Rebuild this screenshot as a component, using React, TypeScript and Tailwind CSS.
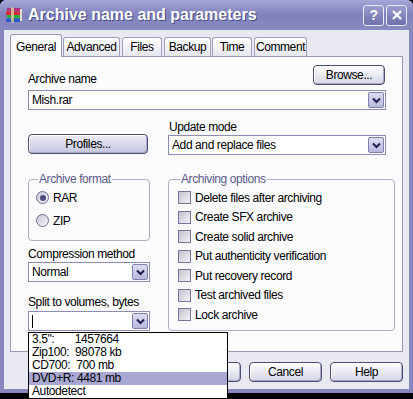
import React from 'react';

const tabs = [
  { name: 'General', w: 'w-[52px]', ml: 'ml-0', active: true },
  { name: 'Advanced', w: 'w-[57px]', ml: 'ml-[1px]' },
  { name: 'Files', w: 'w-[40px]', ml: 'ml-[2px]' },
  { name: 'Backup', w: 'w-[47px]', ml: 'ml-[2px]' },
  { name: 'Time', w: 'w-[40px]', ml: 'ml-[1px]' },
  { name: 'Comment', w: 'w-[53px]', ml: 'ml-[2px]' },
];

const options = [
  'Delete files after archiving',
  'Create SFX archive',
  'Create solid archive',
  'Put authenticity verification',
  'Put recovery record',
  'Test archived files',
  'Lock archive',
];

const volumes = [
  { label: '3.5":       1457664' },
  { label: 'Zip100:  98078 kb' },
  { label: 'CD700:  700 mb' },
  { label: 'DVD+R: 4481 mb', selected: true },
  { label: 'Autodetect' },
];

function RarIcon() {
  return (
    <svg width="17" height="16" viewBox="0 0 17 16">
      <rect x="1" y="1" width="14" height="3.5" rx="0.8" fill="#b0307a" />
      <rect x="0" y="4.5" width="14" height="3.5" rx="0.8" fill="#d8283a" />
      <rect x="1" y="8" width="14" height="3.5" rx="0.8" fill="#2ea844" />
      <rect x="0" y="11.5" width="14" height="3.5" rx="0.8" fill="#2858c8" />
      <rect x="5" y="0.5" width="3" height="15" fill="#d8c89a" opacity="0.85" />
      <rect x="14" y="2" width="2" height="12" fill="#e8e0c8" />
    </svg>
  );
}

function Chevron() {
  return (
    <svg width="9" height="7" viewBox="0 0 9 7">
      <path d="M1 1.5 L4.5 5 L8 1.5" stroke="#1e1e50" strokeWidth="2" fill="none" />
    </svg>
  );
}

function Combo({ value, w, cursor }: { value?: string; w: string; cursor?: boolean }) {
  return (
    <div className={`${w} h-[20px] border border-[#8c8cb4] bg-white flex items-center`}>
      <div className="flex-1 pl-[3px] text-[12px] leading-[14px] text-black truncate">
        {cursor ? <span className="inline-block w-[1px] h-[13px] bg-black align-middle" /> : value}
      </div>
      <div className="w-[16px] h-[16px] mr-[1px] rounded-[2px] border border-[#8080b0] bg-gradient-to-b from-[#dcdcf0] to-[#b8b8dc] flex items-center justify-center">
        <Chevron />
      </div>
    </div>
  );
}

function Button({ label, w, blue }: { label: string; w: string; blue?: boolean }) {
  return (
    <div
      className={`${w} h-[20px] rounded-[4px] border border-[#4c4c74] flex items-center justify-center text-[12px] text-black shadow-[inset_1px_1px_0_#ffffff,inset_-1px_-1px_0_#a8a8c8] ${
        blue ? 'bg-gradient-to-b from-[#ececf8] to-[#c4c4e0]' : 'bg-gradient-to-b from-[#ffffff] to-[#d4d4e6]'
      }`}
    >
      {label}
    </div>
  );
}

function Radio({ label, checked }: { label: string; checked?: boolean }) {
  return (
    <div className="flex items-center h-[13px]">
      <div className="w-[13px] h-[13px] rounded-full border border-[#6c6c98] bg-gradient-to-br from-[#c8c8d6] to-[#f6f6fa] flex items-center justify-center">
        {checked && <div className="w-[6px] h-[6px] rounded-full bg-[#4c4c80]" />}
      </div>
      <span className="ml-[4px] text-[12px] leading-[14px]">{label}</span>
    </div>
  );
}

function Check({ label }: { label: string }) {
  return (
    <div className="flex items-center h-[13px]">
      <div className="w-[13px] h-[13px] border border-[#74749c] bg-gradient-to-br from-[#c2c2d0] to-[#f2f2f6]" />
      <span className="ml-[4px] text-[12px] leading-[14px]">{label}</span>
    </div>
  );
}

export default function App() {
  return (
    <div className="relative w-[413px] h-[399px] bg-black overflow-hidden font-['Liberation_Sans',Arial,sans-serif] tracking-[-0.4px] text-black">
      <div className="h-[393px] flex flex-col bg-[#8787bd] rounded-t-[6px]">
        {/* Title bar */}
        <div className="h-[30px] flex items-center pl-[6px] pr-[6px] rounded-t-[6px] bg-gradient-to-b from-[#a6a6d6] via-[#8080bc] to-[#8a8ac2]">
          <RarIcon />
          <span className="ml-[5px] text-[16px] font-bold text-white tracking-[0px] [text-shadow:1px_1px_0_#4a4a80]">
            Archive name and parameters
          </span>
          <div className="flex-1" />
          <div className="w-[21px] h-[21px] rounded-[3px] border border-[#e8e8f8] bg-gradient-to-b from-[#9c9cd0] to-[#7070ac] flex items-center justify-center text-white font-bold text-[14px]">
            ?
          </div>
          <div className="ml-[2px] w-[21px] h-[21px] rounded-[3px] border border-[#e8e8f8] bg-gradient-to-b from-[#9c9cd0] to-[#7070ac] flex items-center justify-center">
            <svg width="12" height="12" viewBox="0 0 12 12">
              <path d="M2 2 L10 10 M10 2 L2 10" stroke="#ffffff" strokeWidth="2.2" />
            </svg>
          </div>
        </div>

        {/* Body */}
        <div className="flex-1 mx-[4px] mb-[4px] bg-[#e9e9f1] flex flex-col pt-[4px] px-[6px]">
          {/* Tabs */}
          <div className="flex items-end h-[22px] relative z-10">
            {tabs.map((t) =>
              t.active ? (
                <div
                  key={t.name}
                  className={`${t.w} ${t.ml} h-[23px] -mb-[1px] border border-b-0 border-[#9a9ab8] rounded-t-[3px] bg-[#fbfbfd] text-[12px] flex items-start justify-center pt-[3px]`}
                >
                  {t.name}
                </div>
              ) : (
                <div
                  key={t.name}
                  className={`${t.w} ${t.ml} h-[19px] border border-b-0 border-[#a0a0bc] rounded-t-[3px] bg-gradient-to-b from-[#ffffff] to-[#e6e6ee] text-[12px] flex items-center justify-center`}
                >
                  {t.name}
                </div>
              )
            )}
          </div>

          {/* Panel */}
          <div className="h-[296px] border border-[#9a9ab8] bg-[#fbfbfd] pl-[17px] pt-[8px] flex flex-col">
            <div className="w-[357px] flex items-end justify-between h-[20px]">
              <span className="text-[12px] leading-[14px] mb-[-1px]">Archive name</span>
              <Button label="Browse..." w="w-[72px]" />
            </div>
            <div className="mt-[5px]">
              <Combo value="Mish.rar" w="w-[358px]" />
            </div>

            <div className="flex mt-[10px]">
              <div className="w-[140px] pt-[14px]">
                <Button label="Profiles..." w="w-[120px]" blue />
              </div>
              <div className="flex flex-col">
                <span className="text-[12px] leading-[14px] pl-[1px]">Update mode</span>
                <div className="mt-[1px]">
                  <Combo value="Add and replace files" w="w-[218px]" />
                </div>
              </div>
            </div>

            <div className="flex mt-[17px]">
              <div className="w-[140px] flex flex-col">
                <fieldset className="w-[122px] border border-[#aeaec8] rounded-[4px] pl-[7px] pt-[5px] pb-[13px]">
                  <legend className="ml-[2px] px-[1px] text-[12px] leading-[14px] text-[#5a5a8a]">Archive format</legend>
                  <div className="flex flex-col gap-[10px]">
                    <Radio label="RAR" checked />
                    <Radio label="ZIP" />
                  </div>
                </fieldset>
                <span className="mt-[6px] text-[12px] leading-[14px]">Compression method</span>
                <div className="mt-[1px]">
                  <Combo value="Normal" w="w-[122px]" />
                </div>
                <span className="mt-[13px] text-[12px] leading-[14px]">Split to volumes, bytes</span>
                <div className="mt-[2px]">
                  <Combo w="w-[122px]" cursor />
                </div>
              </div>
              <fieldset className="w-[227px] border border-[#aeaec8] rounded-[4px] pl-[9px] pt-[5px] pb-[6px]">
                <legend className="ml-[2px] px-[1px] text-[12px] leading-[14px] text-[#5a5a8a]">Archiving options</legend>
                <div className="flex flex-col gap-[6.5px]">
                  {options.map((o) => (
                    <Check key={o} label={o} />
                  ))}
                </div>
              </fieldset>
            </div>
          </div>

          {/* Bottom buttons */}
          <div className="flex justify-end gap-[8px] mt-[10px]">
            <Button label="OK" w="w-[73px]" />
            <Button label="Cancel" w="w-[73px]" />
            <Button label="Help" w="w-[73px]" />
          </div>
        </div>
      </div>

      {/* Open dropdown list */}
      <div className="absolute left-[28px] top-[332px] w-[200px] border border-black bg-white z-20">
        {volumes.map((v) => (
          <div
            key={v.label}
            className={`h-[13px] pl-[3px] text-[12px] leading-[13px] whitespace-pre ${v.selected ? 'bg-[#a8a8d2]' : ''}`}
          >
            {v.label}
          </div>
        ))}
      </div>
    </div>
  );
}
